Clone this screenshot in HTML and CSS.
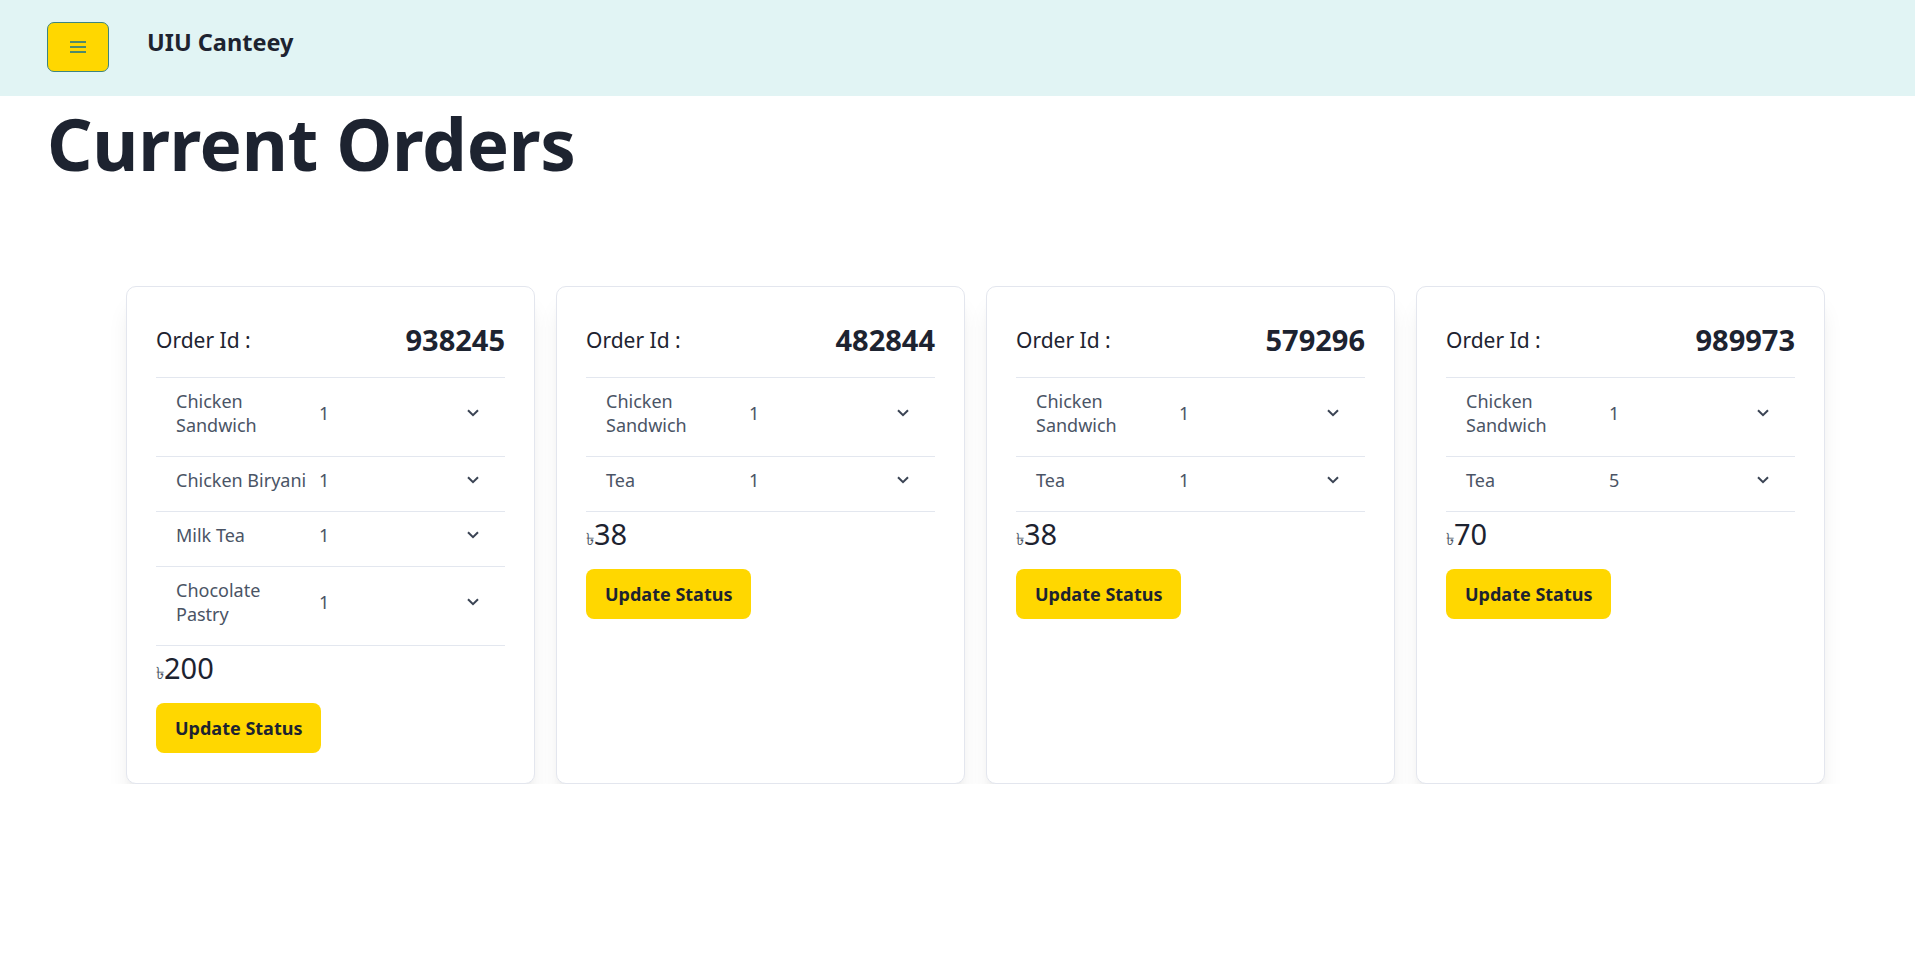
FILE: index.html
```html
<!DOCTYPE html>
<html lang="en">
<head>
<meta charset="utf-8">
<title>UIU Canteey - Current Orders</title>
<link rel="stylesheet" href="styles.css">
</head>
<body>
<header class="navbar">
  <button class="menu-btn" aria-label="menu">
    <svg width="16" height="12" viewBox="0 0 16 12"><path d="M0 1h16M0 6h16M0 11h16" stroke="#4f8a6a" stroke-width="2"/></svg>
  </button>
  <span class="brand">UIU Canteey</span>
</header>
<main class="page">
  <h1 class="page-title">Current Orders</h1>
  <section class="orders">
    <article class="order-card">
      <div class="order-head"><span class="order-label">Order Id :</span><span class="order-id">938245</span></div>
      <ul class="items">
        <li class="item"><span class="item-name">Chicken Sandwich</span><span class="item-qty">1</span><svg class="chev" viewBox="0 0 12 8"><path d="M1 1.2l5 5 5-5" fill="none" stroke="#3b4454" stroke-width="2"/></svg></li>
        <li class="item"><span class="item-name">Chicken Biryani</span><span class="item-qty">1</span><svg class="chev" viewBox="0 0 12 8"><path d="M1 1.2l5 5 5-5" fill="none" stroke="#3b4454" stroke-width="2"/></svg></li>
        <li class="item"><span class="item-name">Milk Tea</span><span class="item-qty">1</span><svg class="chev" viewBox="0 0 12 8"><path d="M1 1.2l5 5 5-5" fill="none" stroke="#3b4454" stroke-width="2"/></svg></li>
        <li class="item"><span class="item-name">Chocolate Pastry</span><span class="item-qty">1</span><svg class="chev" viewBox="0 0 12 8"><path d="M1 1.2l5 5 5-5" fill="none" stroke="#3b4454" stroke-width="2"/></svg></li>
      </ul>
      <div class="total"><span class="taka">৳</span>200</div>
      <button class="update-btn">Update Status</button>
    </article>
    <article class="order-card">
      <div class="order-head"><span class="order-label">Order Id :</span><span class="order-id">482844</span></div>
      <ul class="items">
        <li class="item"><span class="item-name">Chicken Sandwich</span><span class="item-qty">1</span><svg class="chev" viewBox="0 0 12 8"><path d="M1 1.2l5 5 5-5" fill="none" stroke="#3b4454" stroke-width="2"/></svg></li>
        <li class="item"><span class="item-name">Tea</span><span class="item-qty">1</span><svg class="chev" viewBox="0 0 12 8"><path d="M1 1.2l5 5 5-5" fill="none" stroke="#3b4454" stroke-width="2"/></svg></li>
      </ul>
      <div class="total"><span class="taka">৳</span>38</div>
      <button class="update-btn">Update Status</button>
    </article>
    <article class="order-card">
      <div class="order-head"><span class="order-label">Order Id :</span><span class="order-id">579296</span></div>
      <ul class="items">
        <li class="item"><span class="item-name">Chicken Sandwich</span><span class="item-qty">1</span><svg class="chev" viewBox="0 0 12 8"><path d="M1 1.2l5 5 5-5" fill="none" stroke="#3b4454" stroke-width="2"/></svg></li>
        <li class="item"><span class="item-name">Tea</span><span class="item-qty">1</span><svg class="chev" viewBox="0 0 12 8"><path d="M1 1.2l5 5 5-5" fill="none" stroke="#3b4454" stroke-width="2"/></svg></li>
      </ul>
      <div class="total"><span class="taka">৳</span>38</div>
      <button class="update-btn">Update Status</button>
    </article>
    <article class="order-card">
      <div class="order-head"><span class="order-label">Order Id :</span><span class="order-id">989973</span></div>
      <ul class="items">
        <li class="item"><span class="item-name">Chicken Sandwich</span><span class="item-qty">1</span><svg class="chev" viewBox="0 0 12 8"><path d="M1 1.2l5 5 5-5" fill="none" stroke="#3b4454" stroke-width="2"/></svg></li>
        <li class="item"><span class="item-name">Tea</span><span class="item-qty">5</span><svg class="chev" viewBox="0 0 12 8"><path d="M1 1.2l5 5 5-5" fill="none" stroke="#3b4454" stroke-width="2"/></svg></li>
      </ul>
      <div class="total"><span class="taka">৳</span>70</div>
      <button class="update-btn">Update Status</button>
    </article>
  </section>
</main>
</body>
</html>
```
FILE: styles.css
```css
* { box-sizing: border-box; }
html, body { margin: 0; padding: 0; background: #ffffff; }
body {
  font-family: "Noto Sans", "Open Sans", "DejaVu Sans", sans-serif;
  color: #1d2330;
}
.navbar {
  height: 96px;
  background: #e1f4f4;
  display: flex;
  align-items: center;
  padding-left: 47px;
  gap: 38px;
}
.menu-btn {
  width: 62px;
  height: 50px;
  background: #ffd700;
  border: 1px solid #3d8580;
  border-radius: 7px;
  display: flex;
  align-items: center;
  justify-content: center;
  padding: 0;
  margin-top: -2px;
}
.menu-btn svg { display: block; }
.brand {
  font-size: 23.5px;
  font-weight: 700;
  color: #1d2330;
  margin-top: -12px;
}
.page { padding: 0; }
.page-title {
  margin: 0;
  padding-left: 47px;
  font-size: 71px;
  font-weight: 700;
  line-height: 96px;
  letter-spacing: -0.3px;
  color: #1d2330;
}
.orders {
  display: grid;
  grid-template-columns: repeat(4, 409px);
  gap: 21px;
  padding-left: 126px;
  margin-top: 94px;
}
.order-card {
  background: #fff;
  border: 1px solid #e3e6ee;
  border-radius: 10px;
  box-shadow: 0 20px 25px -5px rgba(0,0,0,0.09), 0 8px 10px -6px rgba(0,0,0,0.08);
  padding: 30px 29px 30px 29px;
}
.order-head {
  display: flex;
  justify-content: space-between;
  align-items: center;
  padding: 4px 0 18px 0;
  border-bottom: 1px solid #e3e7ef;
}
.order-label { font-size: 21px; color: #1d2330; }
.order-id { font-size: 29px; font-weight: 700; color: #1d2330; line-height: 38px; }
.items { list-style: none; margin: 0; padding: 0; }
.item {
  display: grid;
  grid-template-columns: 143px 1fr 12px;
  align-items: center;
  padding: 11px 26px 19px 20px;
  border-bottom: 1px solid #e3e7ef;
  font-size: 18px;
  line-height: 24px;
  color: #4a5465;
}
.item-name { padding-right: 8px; }
.chev { width: 12px; height: 8px; display: block; }
.total {
  font-size: 29px;
  line-height: 40px;
  margin-top: 2px;
  color: #1d2330;
}
.taka { font-size: 17px; color: #4a5465; }
.update-btn {
  margin-top: 10px;
  height: 50px;
  padding: 0 19px;
  background: #ffd700;
  border: none;
  border-radius: 8px;
  font-family: inherit;
  font-size: 18px;
  font-weight: 700;
  color: #1d2330;
}
```
